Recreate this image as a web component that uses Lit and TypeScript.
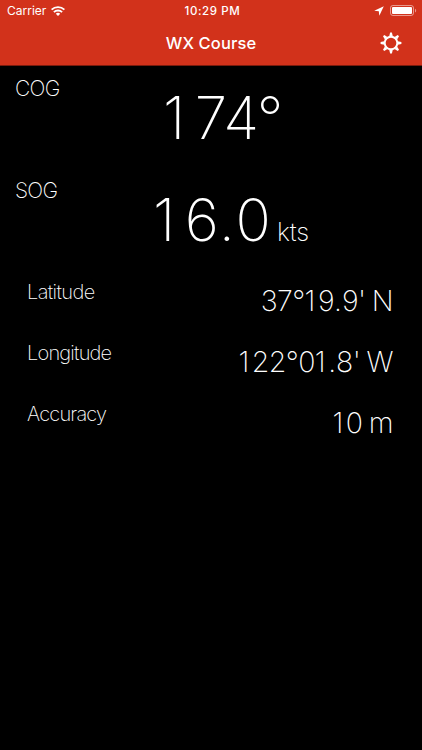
import { LitElement, html, css, svg } from "lit";
import { customElement } from "lit/decorators.js";

const teeth = [0, 45, 90, 135, 180, 225, 270, 315];

const figures = (text: string) =>
  text.split(/([1.])/).filter(Boolean).map((part) =>
    part === "1" ? html`<span class="one">1</span>` : part === "." ? html`<span class="point">.</span>` : part);

@customElement("status-bar")
class StatusBar extends LitElement {
  static styles = css`
    :host { display: grid; grid-template-columns: 1fr auto 1fr; height: 22px; align-items: center; font-size: 12px; line-height: 22px; }
    .left { display: flex; align-items: center; padding-left: 7px; gap: 5px; letter-spacing: 0; }
    .time { font-weight: 500; font-size: 11.5px; letter-spacing: 0.6px; padding-left: 3px; }
    .right { display: flex; align-items: center; justify-content: flex-end; padding-right: 5px; gap: 6px; }
    svg { display: block; }
  `;
  render() {
    return html`
      <div class="left"><span>Carrier</span>
        <svg width="14" height="10" viewBox="0 0 14 10" fill="none" stroke="#fff" stroke-width="1.8">
          <path d="M.6 3.7a9 9 0 0 1 12.8 0" /><path d="M2.9 6.2a5.8 5.8 0 0 1 8.2 0" />
          <path d="M7 10 4.8 7.8a3.1 3.1 0 0 1 4.4 0z" fill="#fff" stroke="none" />
        </svg>
      </div>
      <div class="time">10:29 PM</div>
      <div class="right">
        <svg width="10" height="10" viewBox="0 0 10 10" fill="#fff"><path d="M9.8.2 5.3 9.8 4.8 5.2.2 4.7z" /></svg>
        <svg width="27" height="12" viewBox="0 0 27 12">
          <rect x=".5" y=".5" width="23" height="10" rx="2.4" fill="none" stroke="#fff" stroke-opacity=".5" />
          <rect x="2" y="2" width="20" height="7" rx="1" fill="#fff" />
          <path d="M25 3.7v3.8c1.6-.6 1.6-3.2 0-3.8z" fill="#fff" fill-opacity=".5" />
        </svg>
      </div>`;
  }
}

@customElement("nav-bar")
class NavBar extends LitElement {
  static styles = css`
    :host { display: grid; grid-template-columns: 1fr auto 1fr; align-items: center; height: 43px; }
    .title { grid-column: 2; font-size: 16.5px; font-weight: 550; line-height: 43px; letter-spacing: 0.1px; }
    .action { display: flex; justify-content: flex-end; padding: 0 20px 1px 0; }
    svg { display: block; }
  `;
  render() {
    return html`
      <div class="title">WX Course</div>
      <div class="action">
        <svg width="22" height="22" viewBox="-11 -11 22 22">
          <circle r="6.3" fill="none" stroke="#fff" stroke-width="1.9" />
          ${teeth.map((a) => svg`<path d="M-1.8-6.8-.9-10.4H.9L1.8-6.8z" fill="#fff" transform="rotate(${a})" />`)}
        </svg>
      </div>`;
  }
}

@customElement("app-root")
class AppRoot extends LitElement {
  static styles = css`
    :host { display: block; height: 750px; overflow: hidden; background: #000; color: #fff; font-family: Inter, "Liberation Sans", sans-serif; }
    header { box-sizing: border-box; height: 66px; background: #d2321b; border-bottom: 1px solid #7b1b0d; }
    .gauge { display: grid; grid-template-columns: 100px 1fr; height: 102px; box-sizing: border-box; padding: 11px 0 0 15px; font-weight: 200; }
    .name { font-size: 21px; line-height: 24px; letter-spacing: -0.7px; font-weight: 150; }
    .reading { padding-top: 6px; font-size: 58.5px; line-height: 70px; white-space: nowrap; }
    .course { padding-left: 48px; letter-spacing: -0.4px; }
    .speed { padding-left: 38px; }
    .one { letter-spacing: 0.16em; }
    .point { letter-spacing: 0; }
    .speed .point { letter-spacing: 0.012em; }
    .unit { font-size: 25.5px; letter-spacing: -0.1px; margin-left: 6px; font-weight: 150; }
    .row { display: flex; justify-content: space-between; box-sizing: border-box; height: 61px; padding: 10px 29px 0 27px; }
    .label { font-size: 20px; line-height: 24px; letter-spacing: -0.6px; font-weight: 150; }
    .longitude, .accuracy { letter-spacing: -0.8px; }
    .value { padding-top: 4px; font-size: 28.5px; line-height: 34px; white-space: nowrap; font-weight: 150; letter-spacing: -0.6px; word-spacing: -1px; }
    .value .one { letter-spacing: 0.09em; }
  `;
  render() {
    return html`
      <header><status-bar></status-bar><nav-bar></nav-bar></header>
      <main>
        <section class="gauge"><div class="name">COG</div><div class="reading course">${figures("174°")}</div></section>
        <section class="gauge"><div class="name">SOG</div><div class="reading speed">${figures("16.0")}<span class="unit">kts</span></div></section>
        <section class="row"><div class="label">Latitude</div><div class="value">${figures("37°19.9' N")}</div></section>
        <section class="row"><div class="label longitude">Longitude</div><div class="value">${figures("122°01.8' W")}</div></section>
        <section class="row"><div class="label accuracy">Accuracy</div><div class="value">${figures("10 m")}</div></section>
      </main>`;
  }
}
